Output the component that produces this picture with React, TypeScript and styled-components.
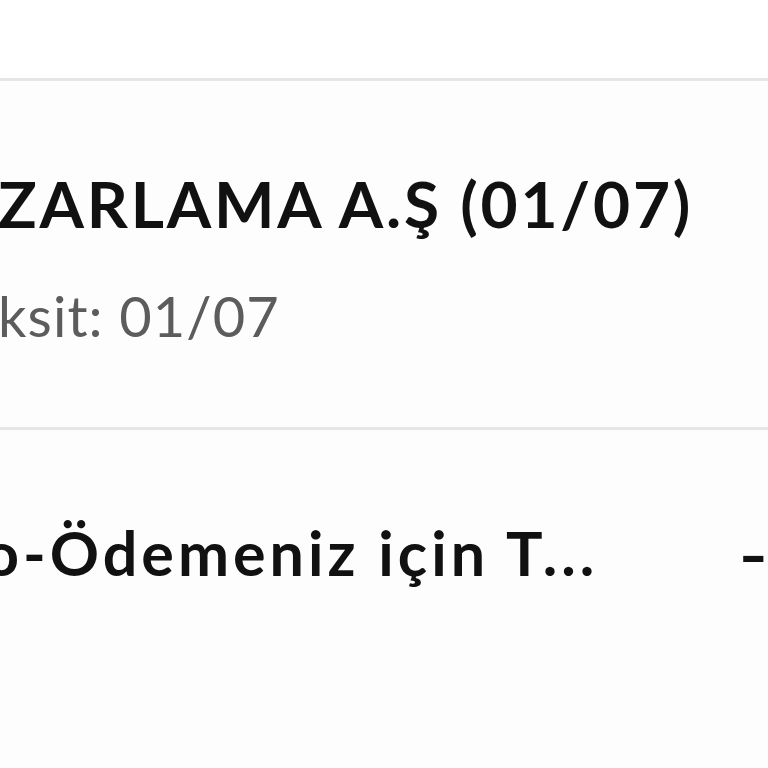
import * as React from 'react';
import styled, { createGlobalStyle } from 'styled-components';

const GlobalStyle = createGlobalStyle`
  html, body {
    margin: 0;
    padding: 0;
    background: #ffffff;
    overflow: hidden;
    font-family: Lato, "Noto Sans", sans-serif;
  }
`;

const Screen = styled.div`
  width: 768px;
  height: 768px;
  display: flex;
  flex-direction: column;
  overflow: hidden;
  background: #ffffff;
`;

const TopSpace = styled.div`
  height: 78px;
`;

const Divider = styled.div`
  height: 3px;
  background: #e6e6e6;
`;

const Item = styled.div<{ $height: number }>`
  height: ${(p) => p.$height}px;
  display: flex;
  align-items: flex-start;
  justify-content: space-between;
  background: #fdfdfd;
`;

const Content = styled.div<{ $shift: number; $top: number }>`
  display: flex;
  flex-direction: column;
  margin-left: ${(p) => p.$shift}px;
  padding-top: ${(p) => p.$top}px;
  white-space: nowrap;
`;

const Title = styled.div<{ $size: number; $spacing: number }>`
  font-size: ${(p) => p.$size}px;
  letter-spacing: ${(p) => p.$spacing}px;
  font-weight: 700;
  color: #111111;
  line-height: 1.2;
`;

const Sub = styled.div`
  font-size: 56px;
  letter-spacing: 1.1px;
  font-weight: 400;
  color: #5c5c5c;
  line-height: 1.2;
  margin-top: 39px;
`;

const Amount = styled.div`
  font-size: 60px;
  font-weight: 700;
  color: #111111;
  line-height: 1.2;
  padding-top: 88px;
  margin-right: 4px;
  white-space: nowrap;
  transform: scaleX(1.3);
`;

export default function App() {
  return (
    <Screen>
      <GlobalStyle />
      <TopSpace />
      <Divider />
      <Item $height={346}>
        <Content $shift={-2} $top={85}>
          <Title $size={64} $spacing={2.8}>ZARLAMA A.Ş (01/07)</Title>
          <Sub>ksit: 01/07</Sub>
        </Content>
      </Item>
      <Divider />
      <Item $height={338}>
        <Content $shift={-16} $top={86}>
          <Title $size={61} $spacing={4}>o-Ödemeniz için T...</Title>
        </Content>
        <Amount>-</Amount>
      </Item>
    </Screen>
  );
}
